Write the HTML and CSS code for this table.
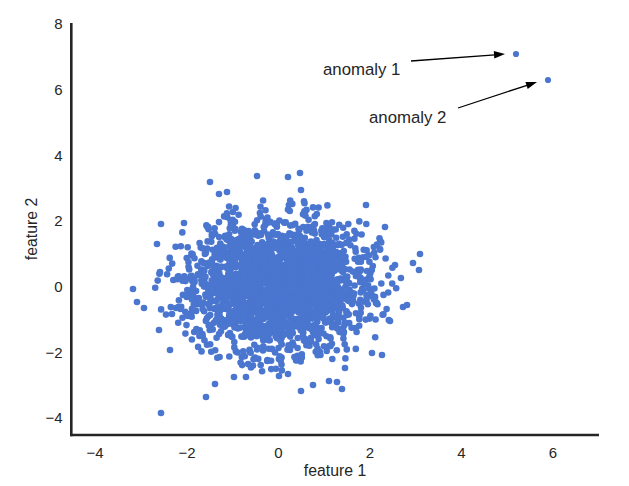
FILE: index.html
```html
<!DOCTYPE html>
<html lang="en">
<head>
<meta charset="utf-8">
<title>Anomaly scatter</title>
<link rel="stylesheet" href="styles.css">
</head>
<body>
<div class="figure">
  <svg class="chart" width="629" height="486" viewBox="0 0 629 486" xmlns="http://www.w3.org/2000/svg">
    <g id="points" class="points"></g>
    <g class="points">
      <circle cx="516" cy="54" r="3.1"/>
      <circle cx="548" cy="80" r="3.1"/>
    </g>
    <g class="spines">
      <line class="spine" x1="71.3" y1="23" x2="71.3" y2="436.2"/>
      <line class="spine" x1="70" y1="435" x2="599" y2="435"/>
    </g>
    <g class="ticks-y">
      <text class="tick tick-y" x="62.5" y="29">8</text>
      <text class="tick tick-y" x="62.5" y="94.5">6</text>
      <text class="tick tick-y" x="62.5" y="160.5">4</text>
      <text class="tick tick-y" x="62.5" y="226">2</text>
      <text class="tick tick-y" x="62.5" y="291.8">0</text>
      <text class="tick tick-y" x="62.5" y="357.5">−2</text>
      <text class="tick tick-y" x="62.5" y="423.3">−4</text>
    </g>
    <g class="ticks-x">
      <text class="tick tick-x" x="95" y="457.5">−4</text>
      <text class="tick tick-x" x="187" y="457.5">−2</text>
      <text class="tick tick-x" x="278.3" y="457.5">0</text>
      <text class="tick tick-x" x="370" y="457.5">2</text>
      <text class="tick tick-x" x="461.5" y="457.5">4</text>
      <text class="tick tick-x" x="553" y="457.5">6</text>
    </g>
    <text class="axis-label" x="335" y="476">feature 1</text>
    <text class="axis-label" x="37" y="229" transform="rotate(-90 37 229)">feature 2</text>
    <g class="annotations">
      <text class="annot" x="323" y="75">anomaly 1</text>
      <text class="annot" x="369" y="123">anomaly 2</text>
      <line class="arrow-line" x1="411" y1="61" x2="495" y2="54.8"/>
      <polygon class="arrow-head" points="505,54 494.3,58.6 493.8,51"/>
      <line class="arrow-line" x1="458" y1="108" x2="527" y2="85.3"/>
      <polygon class="arrow-head" points="537,82 527.7,89 525.4,81.9"/>
    </g>
  </svg>
</div>
<script src="script.js"></script>
</body>
</html>
```

FILE: styles.css
```css
html, body {
  margin: 0;
  padding: 0;
  background: #ffffff;
}

body {
  width: 629px;
  height: 486px;
  overflow: hidden;
}

.figure {
  width: 629px;
  height: 486px;
}

.chart {
  display: block;
}

.points circle {
  fill: #4a76cf;
}

.spine {
  stroke: #262626;
  stroke-width: 2.6;
}

.tick,
.axis-label,
.annot {
  font-family: "Liberation Sans", Arial, sans-serif;
  fill: #262626;
}

.tick {
  font-size: 15px;
}

.tick-y {
  text-anchor: end;
}

.tick-x {
  text-anchor: middle;
}

.axis-label {
  font-size: 15.8px;
  text-anchor: middle;
}

.annot {
  font-size: 16.8px;
}

.arrow-line {
  stroke: #000000;
  stroke-width: 1.3;
}

.arrow-head {
  fill: #000000;
}
```

FILE: script.js
```js
(function () {
  function mulberry32(a) {
    return function () {
      a |= 0;
      a = (a + 0x6D2B79F5) | 0;
      var t = Math.imul(a ^ (a >>> 15), 1 | a);
      t = (t + Math.imul(t ^ (t >>> 7), 61 | t)) ^ t;
      return ((t ^ (t >>> 14)) >>> 0) / 4294967296;
    };
  }
  var rand = mulberry32(20240611);
  function gauss() {
    var u = 0;
    while (u === 0) u = rand();
    var v = rand();
    return Math.sqrt(-2 * Math.log(u)) * Math.cos(2 * Math.PI * v);
  }
  var ns = "http://www.w3.org/2000/svg";
  var g = document.getElementById("points");
  var frag = document.createDocumentFragment();
  function add(px, py) {
    var c = document.createElementNS(ns, "circle");
    c.setAttribute("cx", px.toFixed(1));
    c.setAttribute("cy", py.toFixed(1));
    c.setAttribute("r", "3.3");
    frag.appendChild(c);
  }
  var n = 0;
  while (n < 2200) {
    var x = gauss(), y = gauss();
    if (x * x + y * y > 2.7 * 2.7) continue;
    add(278.3 + 45.8 * x, 286.3 - 32.9 * y);
    n++;
  }
  var outliers = [
    [161, 413], [206, 397], [215, 384], [301, 391], [313, 385], [329, 381],
    [337, 382], [342, 389], [234, 377], [246, 377], [279, 376], [288, 374],
    [345, 368], [133, 289], [137, 302], [144, 308], [161, 224], [184, 223],
    [257, 176], [288, 177], [300, 173], [210, 182], [301, 190], [219, 194],
    [227, 192], [420, 254], [419, 270], [413, 263], [385, 227], [403, 307],
    [407, 305], [390, 321], [382, 355], [372, 353], [157, 244], [160, 272],
    [159, 330], [170, 350], [395, 265], [366, 205]
  ];
  for (var i = 0; i < outliers.length; i++) add(outliers[i][0], outliers[i][1]);
  g.appendChild(frag);
})();
```
